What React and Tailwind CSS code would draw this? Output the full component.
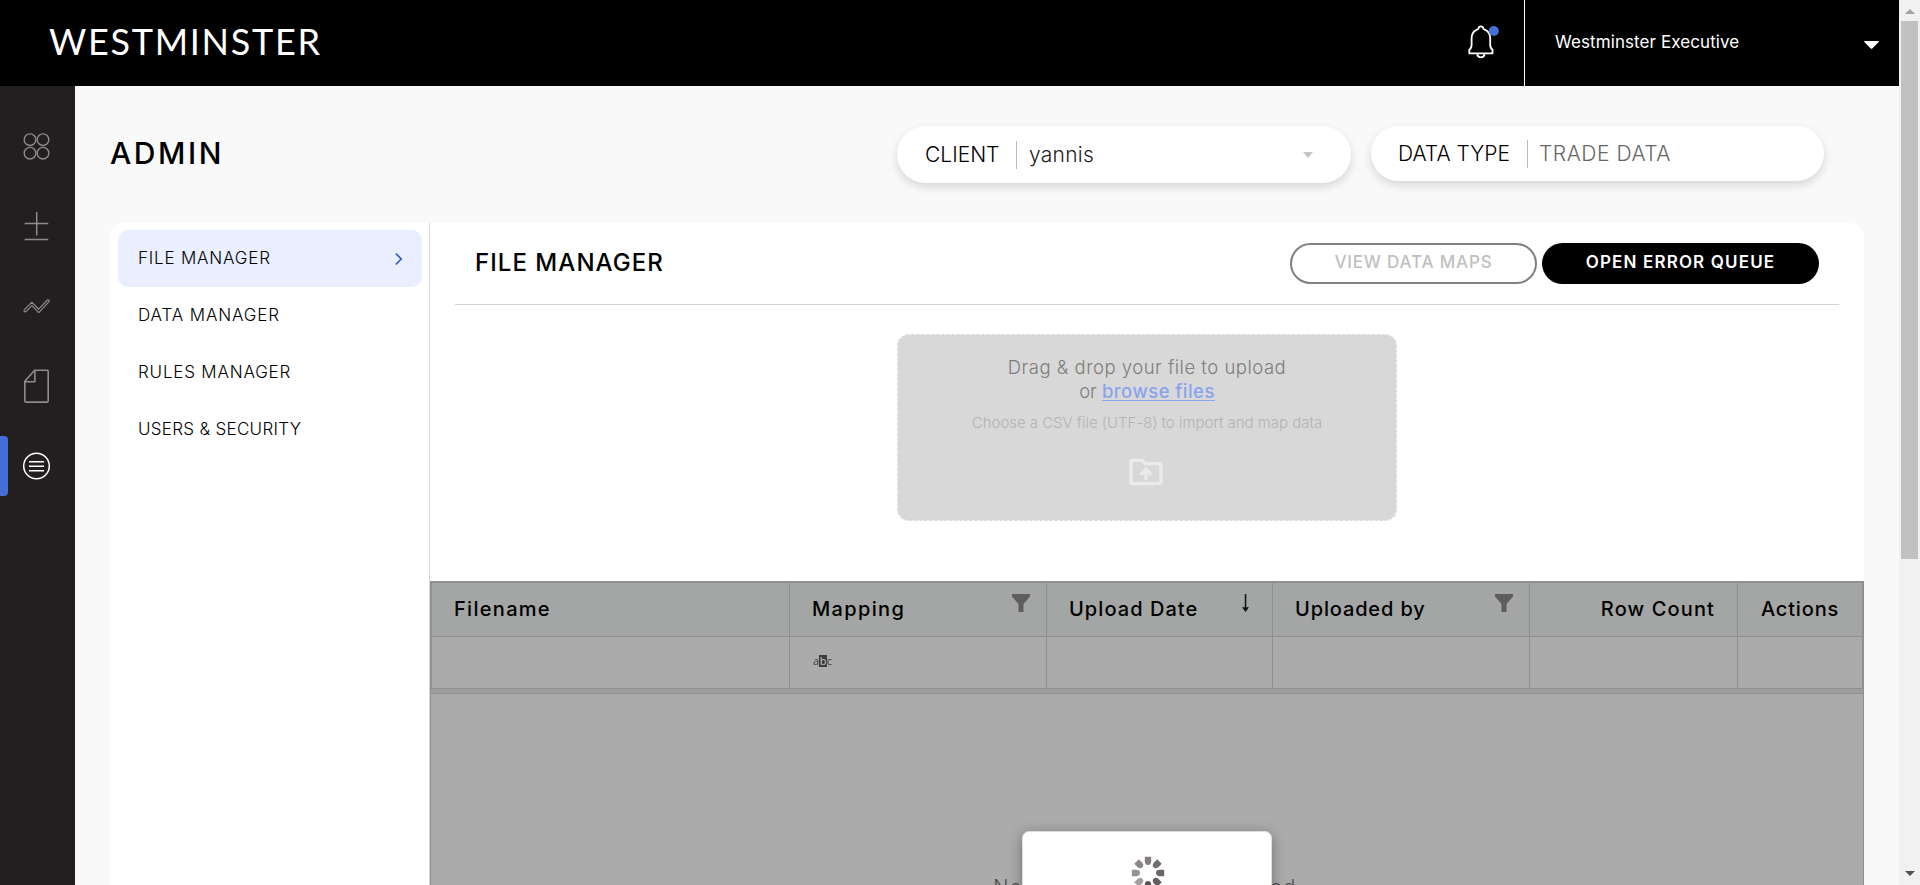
import { MdOutlineDriveFolderUpload } from "react-icons/md";

function LogoBar() {
  return (
    <header className="flex h-[86px] shrink-0 items-center bg-black text-white">
      <div className="ml-[49px] -mt-[5px] font-['Lato',sans-serif] text-[36px] leading-none tracking-[1.7px]">
        WESTMINSTER
      </div>
      <div className="ml-auto flex h-full items-center">
        <svg className="mr-[25px] mb-[3px]" width="34" height="36" viewBox="0 0 34 36" fill="none">
          <path
            d="M4.300 29.400v-3.600c1.800-1.200 2.300-2.600 2.300-5v-6.200c0-4.600 2.400-8 6-9.200.6-.2.8-.6.9-1 .2-1.200 1.100-2 2.400-2s2.200.8 2.400 2c.1.400.3.800.9 1 3.600 1.200 6 4.600 6 9.200v6.200c0 2.400.5 3.800 2.300 5v3.600z"
            stroke="#fff"
            strokeWidth="1.800"
            strokeLinejoin="round"
          />
          <path d="M12.200 30c.3 2 1.800 3.300 3.700 3.300s3.400-1.300 3.700-3.300" stroke="#fff" strokeWidth="1.800" />
          <circle cx="28.800" cy="7" r="5" fill="#4470d8" />
        </svg>
        <div className="flex h-full w-[375px] items-center justify-between border-l border-white pl-[30px] pr-5">
          <span className="text-[17px] tracking-[0.09px]">Westminster Executive</span>
          <svg className="mt-[4px]" width="15" height="8" viewBox="0 0 15 8">
            <path d="M.8 0h13.400c.7 0 1 .6.500 1.100L8.300 7.400c-.5.500-1.100.500-1.600 0L.3 1.100C-.2.600.1 0 .8 0z" fill="#fff" />
          </svg>
        </div>
      </div>
    </header>
  );
}

function SideRail() {
  return (
    <nav className="flex w-[75px] shrink-0 flex-col bg-[#231f20] pt-[20px] text-[#8d8b8c]">
      <div className="flex h-20 items-center pl-[22px]">
        <svg width="30" height="30" viewBox="0 0 30 30" fill="none" stroke="currentColor" strokeWidth="1.4">
          <circle cx="8" cy="8.700" r="5.800" />
          <circle cx="21" cy="8.700" r="5.800" />
          <circle cx="8" cy="22.200" r="5.800" />
          <circle cx="21" cy="22.200" r="5.800" />
        </svg>
      </div>
      <div className="flex h-20 items-center pl-[22px]">
        <svg width="30" height="30" viewBox="0 0 30 30" fill="none" stroke="currentColor" strokeWidth="1.500">
          <path d="M14.700 1v23.500M2.700 12.600h23.500M2.700 28.500h23.500" />
        </svg>
      </div>
      <div className="flex h-20 items-center pl-[22px]">
        <svg width="30" height="30" viewBox="0 0 30 30" fill="none" stroke="currentColor" strokeWidth="1.200" strokeLinejoin="round">
          <path d="M2.200 18.800 9.700 11.300l7 6.900 8.700-9.200c1.300-.6 2.200.4 1.400 1.900L16.800 21.600l-7-7L4 20.600c-1.300.8-2.600-.4-1.800-1.800z" />
        </svg>
      </div>
      <div className="flex h-20 items-center pl-[22px]">
        <svg width="30" height="36" viewBox="0 0 30 36" fill="none" stroke="currentColor" strokeWidth="1.600" strokeLinejoin="round">
          <path d="M12.600 2.300H25.200c.6 0 1 .4 1 1v29.800c0 .6-.4 1-1 1H3.800c-.6 0-1-.4-1-1V13.200z" />
          <path d="M12.900 2.500v11.300H3" />
        </svg>
      </div>
      <div className="flex h-20 items-center">
        <div className="h-[60px] w-2 rounded-r-[4px] bg-[#446dd8]" />
        <svg className="ml-[14px]" width="30" height="30" viewBox="0 0 30 30" fill="none" stroke="#fff" strokeWidth="1.500">
          <circle cx="14.500" cy="15" r="12.800" />
          <path d="M7 10.800h15M7 15.300h15M7 19.800h15" />
        </svg>
      </div>
    </nav>
  );
}

function PageTop() {
  return (
    <div className="flex items-start pl-[35px]">
      <h1 className="mt-[51px] text-[30px] leading-[32px] font-medium tracking-[2.6px] text-black">ADMIN</h1>
      <div className="ml-auto flex items-start pt-10 text-[21px] font-light">
        <div className="flex h-[57px] w-[454px] items-center rounded-full bg-white pl-[28px] shadow-[0_4px_10px_rgba(0,0,0,0.14)]">
          <span className="w-[91px] text-black">CLIENT</span>
          <span className="h-7 w-px bg-[#b9b9b9]" />
          <span className="ml-[12px] tracking-[0.28px] text-[#222]">yannis</span>
          <span className="mr-[38px] ml-auto h-0 w-0 border-x-[5.5px] border-t-[6px] border-x-transparent border-t-[#c4c4c4]" />
        </div>
        <div className="mr-[75px] ml-5 flex h-[55px] w-[453px] items-center rounded-full bg-white pl-[27px] shadow-[0_4px_10px_rgba(0,0,0,0.14)]">
          <span className="w-[129px] whitespace-nowrap text-black">DATA TYPE</span>
          <span className="h-7 w-px bg-[#b9b9b9]" />
          <span className="ml-[11px] tracking-[0.51px] text-[#666]">TRADE DATA</span>
        </div>
      </div>
    </div>
  );
}

function AdminMenu() {
  return (
    <aside className="w-[320px] shrink-0 rounded-tl-[14px] border-r border-[#d6d6d6] bg-white pt-[7px] pr-[7px] pl-2 text-[17px] font-light text-black">
      <div className="flex h-[57px] items-center justify-between rounded-[10px] bg-[#e9effe] pr-[19px] pl-[20px] tracking-[0.8px]">
        FILE MANAGER
        <svg width="9" height="14" viewBox="0 0 9 14" fill="none" stroke="#2a5bd7" strokeWidth="1.700">
          <path d="M1.800 1.500 7.200 7l-5.400 5.500" />
        </svg>
      </div>
      <div className="flex h-[57px] items-center pl-[20px] tracking-[0.88px]">DATA MANAGER</div>
      <div className="flex h-[57px] items-center pl-[20px] tracking-[0.8px]">RULES MANAGER</div>
      <div className="flex h-[57px] items-center pl-[20px] tracking-[0.3px]">USERS &amp; SECURITY</div>
    </aside>
  );
}

function ManagerHeader() {
  return (
    <div className="mx-[25px] flex h-[82px] shrink-0 items-center border-b border-[#d4d4d4] pr-5 pl-[20px]">
      <h2 className="mb-px text-[24px] font-medium tracking-[1.05px] text-black">FILE MANAGER</h2>
      <button className="ml-auto h-[41px] w-[247px] rounded-full border-2 border-[#808080] pb-px text-[17px] font-medium tracking-[0.84px] text-[#c0c0c0]">
        VIEW DATA MAPS
      </button>
      <button className="ml-[5px] h-[41px] w-[277px] rounded-full bg-black pb-px text-[17px] font-semibold tracking-[1.15px] text-white">
        OPEN ERROR QUEUE
      </button>
    </div>
  );
}

function DropZone() {
  return (
    <div className="mx-auto mt-[29px] flex h-[187px] w-[500px] shrink-0 flex-col items-center rounded-[12px] border border-dashed border-[#f0f0f0] bg-[#d8d8d8] pt-[20px] text-[18.5px] leading-6 font-light text-[#7e7e7e]">
      <p className="tracking-[0.5px]">Drag &amp; drop your file to upload</p>
      <p>
        or <a className="font-medium tracking-[0.45px] text-[#8aa4ec] underline decoration-1 underline-offset-2">browse files</a>
      </p>
      <p className="mt-[8px] text-[15px] tracking-[-0.03px] text-[#b3b3b3]">Choose a CSV file (UTF-8) to import and map data</p>
      <MdOutlineDriveFolderUpload className="mt-[17px] mr-[2px] h-10 w-10 text-[#ebebeb]" />
    </div>
  );
}

function Funnel() {
  return (
    <svg className="mt-[11px] ml-auto self-start" width="18" height="18" viewBox="0 0 18 18" fill="#5f5c5d">
      <path d="M0 0h18v2.500L11.500 10v8h-5v-8L0 2.500z" />
    </svg>
  );
}

function FilesTable() {
  return (
    <div className="mt-[60px] flex flex-1 flex-col bg-[#ababab]">
      <div className="shrink-0 border-2 border-b border-[#8f8f8f]">
        <div className="grid h-[54px] grid-cols-[357px_257px_226px_257px_208px_1fr] border-b border-[#8f8f8f] bg-[#a4a6a5] text-[20px] font-medium text-black">
          <div className="flex items-center pb-[2px] pl-[22px] tracking-[1.3px]">Filename</div>
          <div className="flex items-center border-l border-[#8f8f8f] pr-[16px] pb-[2px] pl-[22px] tracking-[1.35px]">
            Mapping
            <Funnel />
          </div>
          <div className="flex items-center border-l border-[#8f8f8f] pr-[21px] pb-[2px] pl-[22px] tracking-[1.06px]">
            Upload Date
            <svg className="mt-[11px] ml-auto self-start" width="11" height="18" viewBox="0 0 11 18">
              <path d="M4.800 0h1.500v14H4.800zM2 13.200h7L5.500 18z" fill="#111" />
            </svg>
          </div>
          <div className="flex items-center border-l border-[#8f8f8f] pr-[16px] pb-[2px] pl-[22px] tracking-[0.86px]">
            Uploaded by
            <Funnel />
          </div>
          <div className="flex items-center justify-end border-l border-[#8f8f8f] pr-[22px] pb-[2px] tracking-[1.13px]">Row Count</div>
          <div className="flex items-center border-l border-[#8f8f8f] pb-[2px] pl-[23px] tracking-[0.83px]">Actions</div>
        </div>
        <div className="grid h-[51px] grid-cols-[357px_257px_226px_257px_208px_1fr]">
          <div />
          <div className="flex border-l border-[#8f8f8f] pt-[18px] pl-[23px] font-['Open_Sans',sans-serif] text-[11px] leading-[12px] text-[#3e3e3e]">
            a<span className="h-[12px] bg-[#3c3c3c] px-[0.5px] text-[#c8c8c8]">b</span>c
          </div>
          <div className="border-l border-[#8f8f8f]" />
          <div className="border-l border-[#8f8f8f]" />
          <div className="border-l border-[#8f8f8f]" />
          <div className="border-l border-[#8f8f8f]" />
        </div>
      </div>
      <div className="h-1 shrink-0 border-x border-[#8f8f8f] bg-[#9d9d9d]" />
      <div className="relative h-[400px] shrink-0 border border-[#8f8f8f]">
        <p className="mt-[181px] pr-[4px] text-center text-[20px] leading-6 font-light tracking-[1.36px] text-[#4f4a4c]">
          No files have been uploaded
        </p>
        <div className="absolute top-[137px] left-1/2 flex h-[120px] w-[250px] -translate-x-1/2 justify-center rounded-[7px] border border-[#ddd] bg-white pt-[24px] shadow-[0_3px_14px_rgba(0,0,0,0.35)]">
          <Spinner />
        </div>
      </div>
    </div>
  );
}

const SPOKES = ["#837d7f", "#746c6f", "#6c6467", "#645b5f", "#5b5155", "#a39fa1", "#969193", "#8b8688"];

function Spinner() {
  return (
    <svg className="ml-[2px]" width="34" height="34" viewBox="-17 -17 34 34">
      {SPOKES.map((color, i) => (
        <path key={color} d="M-3.200-16.200h6.400v4.500c0 2.200-1.200 3.700-3.200 3.700s-3.200-1.500-3.200-3.700z" fill={color} transform={`rotate(${i * 45})`} />
      ))}
    </svg>
  );
}

function ScrollTrack() {
  return (
    <div className="flex w-[21px] shrink-0 flex-col items-center bg-[#f1f1f1]">
      <div className="mt-[9px] h-0 w-0 border-x-[5px] border-b-[5px] border-x-transparent border-b-[#a3a3a3]" />
      <div className="mt-[7px] h-[538px] w-[17px] bg-[#c1c1c1]" />
      <div className="mt-auto mb-[9px] h-0 w-0 border-x-[5px] border-t-[5px] border-x-transparent border-t-[#505050]" />
    </div>
  );
}

export default function App() {
  return (
    <div className="flex h-[885px] w-[1920px] overflow-hidden bg-[#f9f9f9] font-['Inter',sans-serif]">
      <div className="flex w-[1899px] shrink-0 flex-col">
        <LogoBar />
        <div className="flex min-h-0 flex-1 overflow-hidden">
          <SideRail />
          <div className="flex flex-1 flex-col">
            <div className="h-[137px] shrink-0">
              <PageTop />
            </div>
            <div className="mx-[35px] flex min-h-0 flex-1">
              <AdminMenu />
              <section className="flex flex-1 flex-col rounded-tr-[14px] bg-white">
                <ManagerHeader />
                <DropZone />
                <FilesTable />
              </section>
            </div>
          </div>
        </div>
      </div>
      <ScrollTrack />
    </div>
  );
}
